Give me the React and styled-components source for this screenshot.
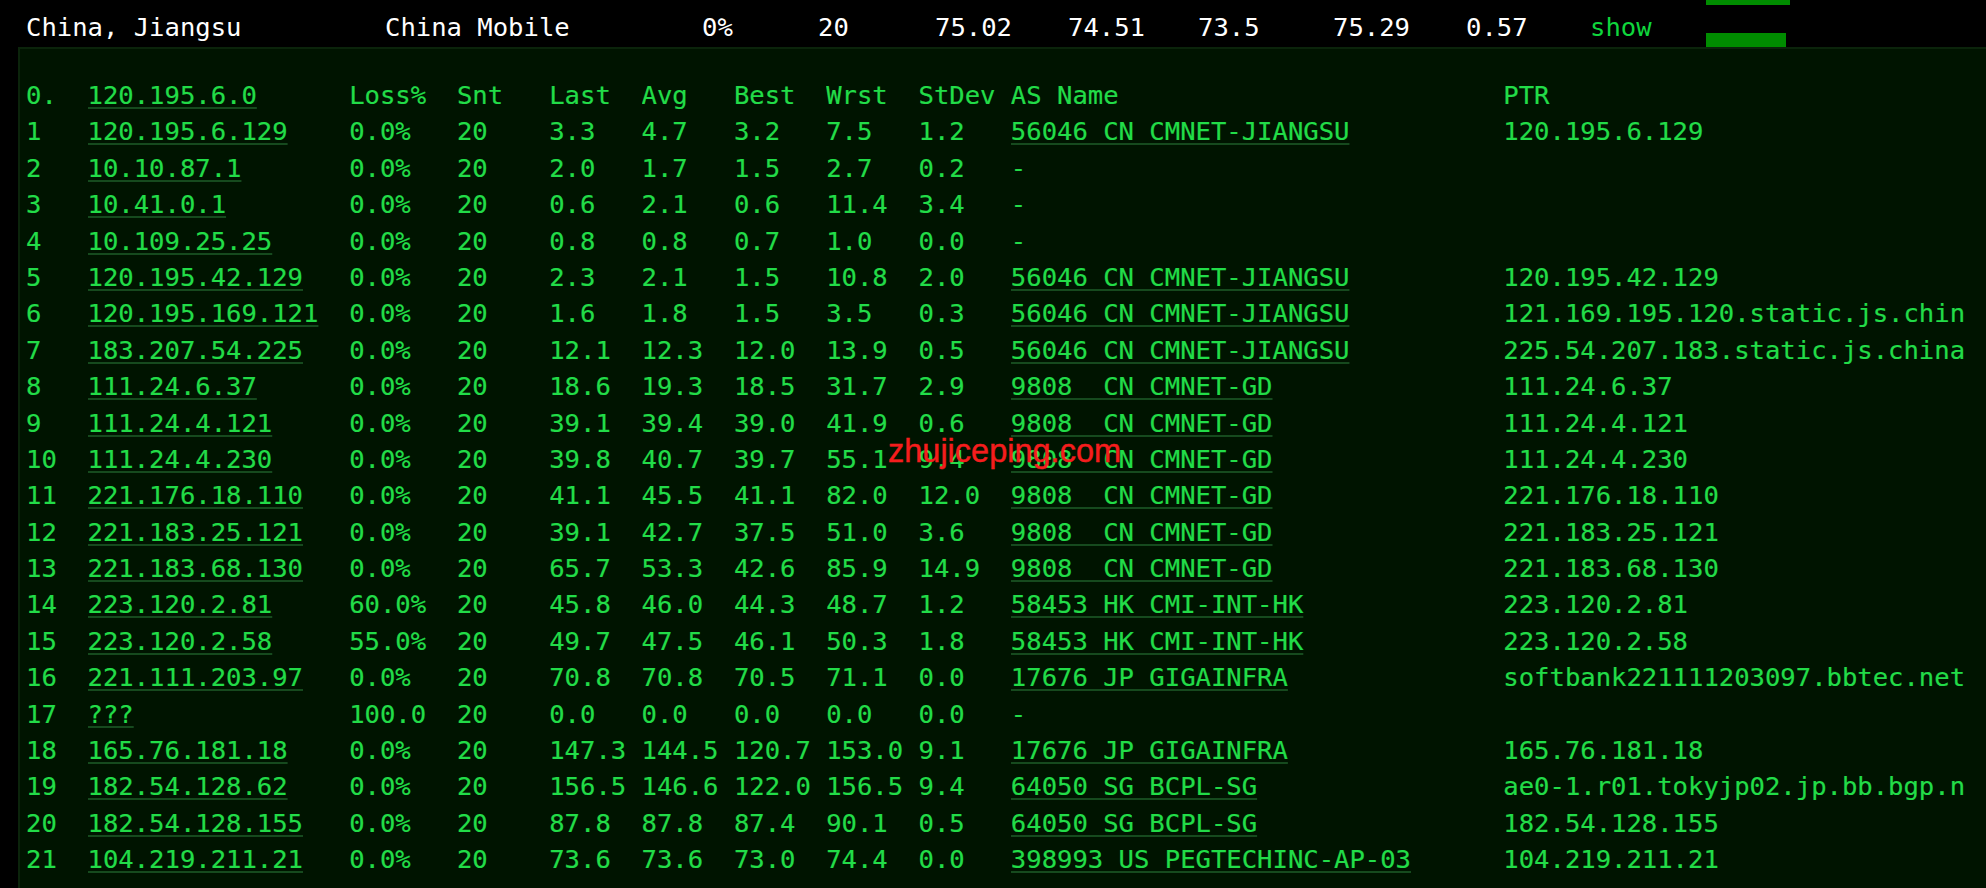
import React from 'react';
import styled, { createGlobalStyle } from 'styled-components';

const GlobalStyle = createGlobalStyle`
    html, body {
        margin: 0;
        height: 888px;
        overflow: hidden;
        background: #000;
    }
`;

const Page = styled.div`
    position: relative;
    width: 1986px;
    height: 888px;
    overflow: hidden;
    font-family: "DejaVu Sans Mono", "Liberation Mono", monospace;
    font-size: 25.57px;
`;

const Summary = styled.div`
    display: grid;
    grid-template-columns: 359px 317px 116px 117px 133px 130px 135px 133px 124px 116px 90px;
    grid-template-rows: 47px;
    height: 47px;
    padding-left: 26px;
    color: #fff;
`;

const SummaryCell = styled.span`
    line-height: 54px;
    white-space: pre;
`;

const ShowLink = styled(SummaryCell)`
    color: #0fd63c;
`;

const Bars = styled.div`
    display: flex;
    flex-direction: column;
    justify-content: space-between;
`;

const Bar = styled.div`
    height: ${(props) => props.height}px;
    width: ${(props) => props.width}px;
    background: #008c00;
`;

const Panel = styled.div`
    margin-left: 18px;
    height: 841px;
    box-sizing: border-box;
    padding: 28px 0 0 6px;
    background: #001400;
    border-top: 2px solid #0b240b;
    border-left: 2px solid #0b240b;
    color: #22dc48;
    -webkit-text-stroke: 0.2px #22dc48;
`;

const Row = styled.div`
    display: grid;
    grid-template-columns: 4ch 17ch 7ch 6ch 6ch 6ch 6ch 6ch 6ch 32ch 30ch;
    height: 36.4px;
    line-height: 36.4px;
`;

const Cell = styled.span`
    white-space: pre;
    overflow: hidden;
`;

const Hop = styled.a`
    color: inherit;
    text-decoration: underline #164a1e 2px;
    text-underline-offset: 3px;
    text-decoration-skip-ink: none;
`;

const Watermark = styled.div`
    position: absolute;
    left: 888px;
    top: 431px;
    font-family: "Liberation Sans", Arial, sans-serif;
    font-size: 32.5px;
    line-height: 40px;
    color: #f51d1d;
    -webkit-text-stroke: 0.4px #f51d1d;
`;

const HEADER = ['Loss%', 'Snt', 'Last', 'Avg', 'Best', 'Wrst', 'StDev'];

const HOPS = [
    ['1', '120.195.6.129', '0.0%', '3.3', '4.7', '3.2', '7.5', '1.2', '56046 CN CMNET-JIANGSU', '120.195.6.129'],
    ['2', '10.10.87.1', '0.0%', '2.0', '1.7', '1.5', '2.7', '0.2', '-', ''],
    ['3', '10.41.0.1', '0.0%', '0.6', '2.1', '0.6', '11.4', '3.4', '-', ''],
    ['4', '10.109.25.25', '0.0%', '0.8', '0.8', '0.7', '1.0', '0.0', '-', ''],
    ['5', '120.195.42.129', '0.0%', '2.3', '2.1', '1.5', '10.8', '2.0', '56046 CN CMNET-JIANGSU', '120.195.42.129'],
    ['6', '120.195.169.121', '0.0%', '1.6', '1.8', '1.5', '3.5', '0.3', '56046 CN CMNET-JIANGSU', '121.169.195.120.static.js.china'],
    ['7', '183.207.54.225', '0.0%', '12.1', '12.3', '12.0', '13.9', '0.5', '56046 CN CMNET-JIANGSU', '225.54.207.183.static.js.china'],
    ['8', '111.24.6.37', '0.0%', '18.6', '19.3', '18.5', '31.7', '2.9', '9808  CN CMNET-GD', '111.24.6.37'],
    ['9', '111.24.4.121', '0.0%', '39.1', '39.4', '39.0', '41.9', '0.6', '9808  CN CMNET-GD', '111.24.4.121'],
    ['10', '111.24.4.230', '0.0%', '39.8', '40.7', '39.7', '55.1', '9.4', '9808  CN CMNET-GD', '111.24.4.230'],
    ['11', '221.176.18.110', '0.0%', '41.1', '45.5', '41.1', '82.0', '12.0', '9808  CN CMNET-GD', '221.176.18.110'],
    ['12', '221.183.25.121', '0.0%', '39.1', '42.7', '37.5', '51.0', '3.6', '9808  CN CMNET-GD', '221.183.25.121'],
    ['13', '221.183.68.130', '0.0%', '65.7', '53.3', '42.6', '85.9', '14.9', '9808  CN CMNET-GD', '221.183.68.130'],
    ['14', '223.120.2.81', '60.0%', '45.8', '46.0', '44.3', '48.7', '1.2', '58453 HK CMI-INT-HK', '223.120.2.81'],
    ['15', '223.120.2.58', '55.0%', '49.7', '47.5', '46.1', '50.3', '1.8', '58453 HK CMI-INT-HK', '223.120.2.58'],
    ['16', '221.111.203.97', '0.0%', '70.8', '70.8', '70.5', '71.1', '0.0', '17676 JP GIGAINFRA', 'softbank221111203097.bbtec.net'],
    ['17', '???', '100.0', '0.0', '0.0', '0.0', '0.0', '0.0', '-', ''],
    ['18', '165.76.181.18', '0.0%', '147.3', '144.5', '120.7', '153.0', '9.1', '17676 JP GIGAINFRA', '165.76.181.18'],
    ['19', '182.54.128.62', '0.0%', '156.5', '146.6', '122.0', '156.5', '9.4', '64050 SG BCPL-SG', 'ae0-1.r01.tokyjp02.jp.bb.bgp.n'],
    ['20', '182.54.128.155', '0.0%', '87.8', '87.8', '87.4', '90.1', '0.5', '64050 SG BCPL-SG', '182.54.128.155'],
    ['21', '104.219.211.21', '0.0%', '73.6', '73.6', '73.0', '74.4', '0.0', '398993 US PEGTECHINC-AP-03', '104.219.211.21'],
];

function TraceRow({ num, host, stats, as, ptr }) {
    return (
        <Row>
            <Cell>{num}</Cell>
            <Cell><Hop>{host}</Hop></Cell>
            {stats.map((s, idx) => <Cell key={idx}>{s}</Cell>)}
            <Cell>{as === '-' || as === 'AS Name' ? as : <Hop>{as}</Hop>}</Cell>
            <Cell>{ptr}</Cell>
        </Row>
    );
}

export default function App() {
    return (
        <Page>
            <GlobalStyle />
            <Summary>
                <SummaryCell>China, Jiangsu</SummaryCell>
                <SummaryCell>China Mobile</SummaryCell>
                <SummaryCell>0%</SummaryCell>
                <SummaryCell>20</SummaryCell>
                <SummaryCell>75.02</SummaryCell>
                <SummaryCell>74.51</SummaryCell>
                <SummaryCell>73.5</SummaryCell>
                <SummaryCell>75.29</SummaryCell>
                <SummaryCell>0.57</SummaryCell>
                <ShowLink>show</ShowLink>
                <Bars>
                    <Bar width={84} height={5} />
                    <Bar width={80} height={14} />
                </Bars>
            </Summary>
            <Panel>
                <TraceRow num="0." host="120.195.6.0" stats={HEADER} as="AS Name" ptr="PTR" />
                {HOPS.map(([num, host, loss, ...rest]) => (
                    <TraceRow
                        key={num}
                        num={num}
                        host={host}
                        stats={[loss, '20', ...rest.slice(0, 5)]}
                        as={rest[5]}
                        ptr={rest[6]}
                    />
                ))}
            </Panel>
            <Watermark>zhujiceping.com</Watermark>
        </Page>
    );
}
